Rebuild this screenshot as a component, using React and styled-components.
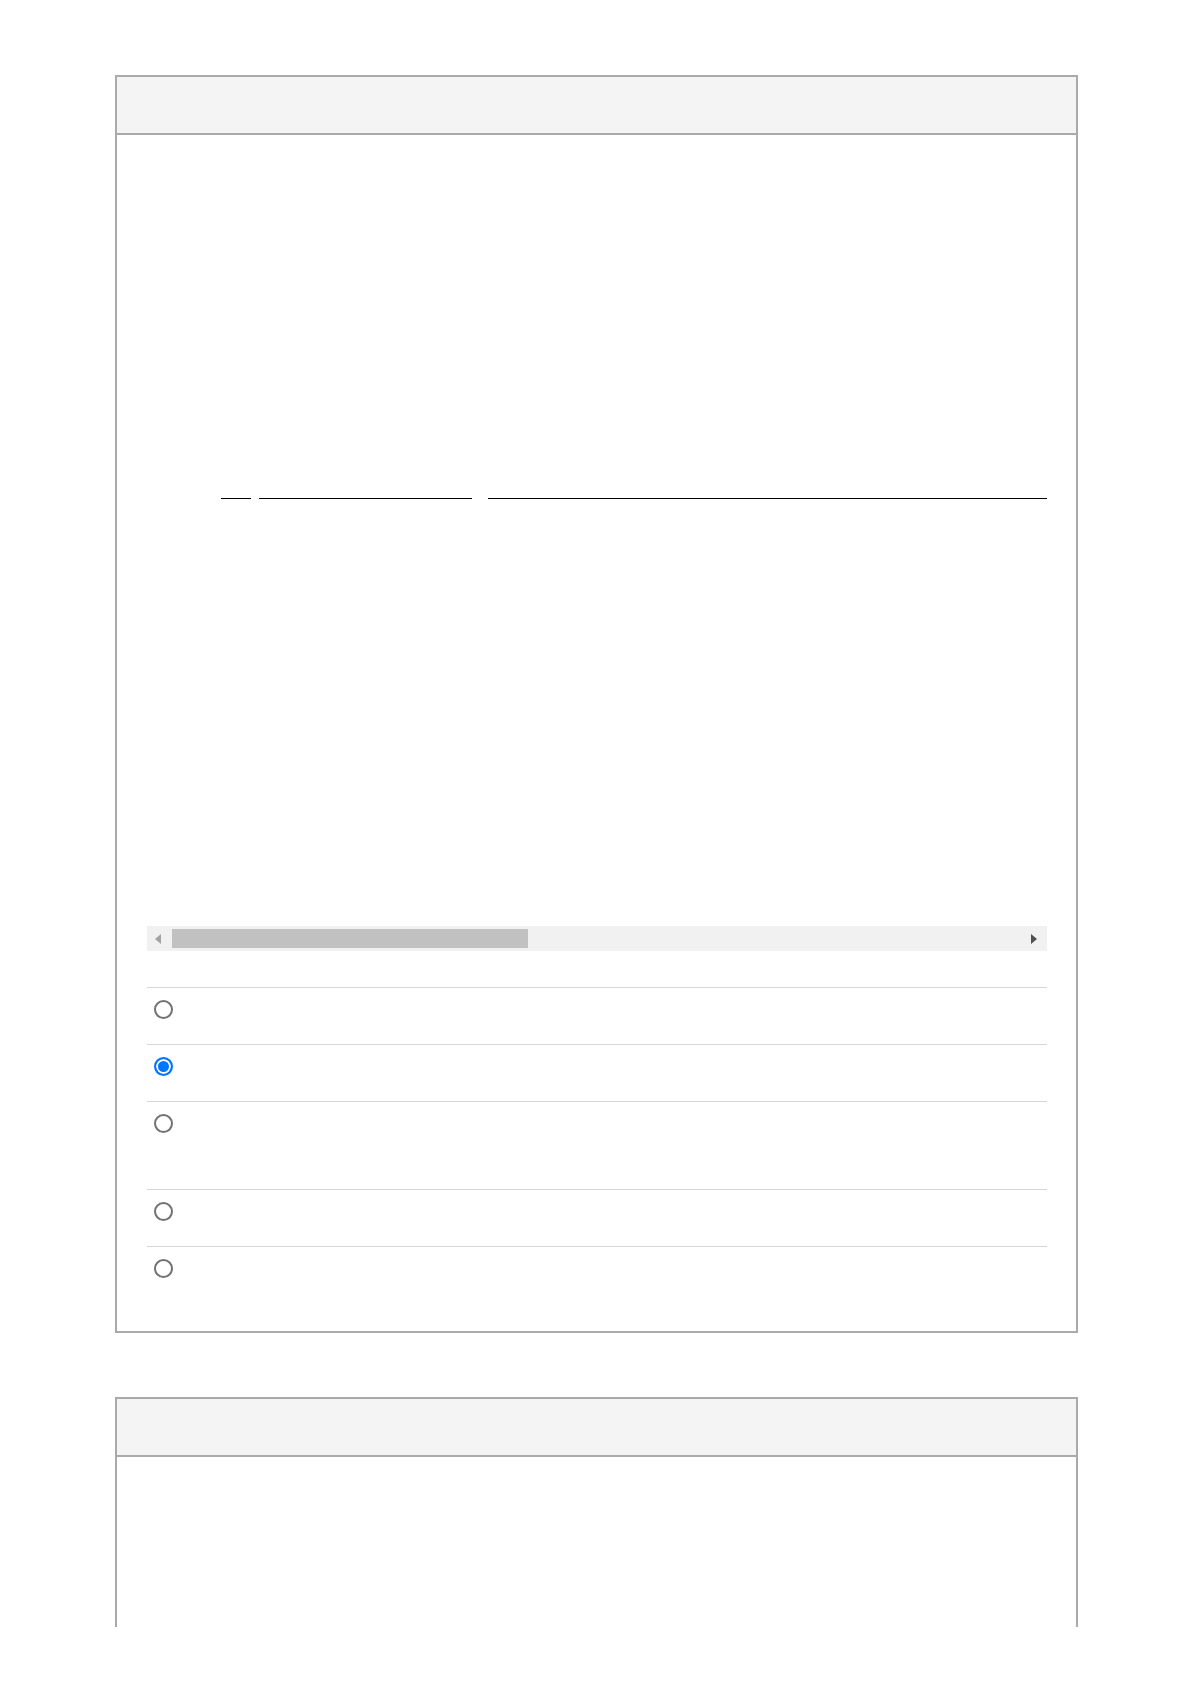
import React from 'react';
import styled, { createGlobalStyle } from 'styled-components';

const GlobalStyle = createGlobalStyle`
  html, body {
    margin: 0;
    padding: 0;
    background: #fff;
    font-family: "Liberation Sans", Arial, sans-serif;
    color: #222;
  }
`;

const Page = styled.div`
  height: 1627px;
  overflow: hidden;
  box-sizing: border-box;
  padding: 75px 0 0 115px;
`;

const Panel = styled.section`
  width: 963px;
  box-sizing: border-box;
  border: 2px solid #aaaaaa;
  background: #fff;
  margin-bottom: 64px;
  min-height: ${(p) => p.$minHeight || 'auto'};
`;

const PanelHeader = styled.header`
  height: 56px;
  background: #f4f4f4;
  border-bottom: 2px solid #aaaaaa;
`;

const PanelBody = styled.div`
  padding: 0 29px 28px 30px;
`;

// Underlined fields row
const FieldRow = styled.div`
  display: grid;
  grid-template-columns: 66px 30px 213px 1fr;
  column-gap: 8px;
  margin-top: 340px;
  & > div:nth-child(4) {
    margin-left: 8px;
  }
`;

const Field = styled.div`
  height: 23px;
  border-bottom: ${(p) => (p.$blank ? 'none' : '1px solid #000')};
`;

// Horizontal scrollbar
const ScrollTrack = styled.div`
  margin-top: 427px;
  height: 25px;
  background: #f1f1f1;
  display: flex;
  align-items: center;
  padding: 0 10px 0 8px;
`;

const Arrow = styled.span`
  width: 0;
  height: 0;
  border-top: 5px solid transparent;
  border-bottom: 5px solid transparent;
  ${(p) =>
    p.$dir === 'left'
      ? `border-right: 6px solid ${p.$color};`
      : `border-left: 6px solid ${p.$color};`}
`;

const Thumb = styled.div`
  width: 356px;
  height: 19px;
  margin-left: 11px;
  background: #c1c1c1;
`;

const Spacer = styled.div`
  flex: 1;
`;

// Option list
const OptionList = styled.ul`
  list-style: none;
  margin: 36px 0 0;
  padding: 0;
`;

const Option = styled.li`
  height: ${(p) => p.$h}px;
  box-sizing: border-box;
  border-top: 1px solid #d6d6d6;
  padding: 12px 0 0 7px;
`;

const Radio = styled.span`
  display: block;
  width: 19px;
  height: 19px;
  box-sizing: border-box;
  border-radius: 50%;
  border: 2px solid ${(p) => (p.$checked ? '#0075ff' : '#727272')};
  background: ${(p) => (p.$checked ? '#0075ff' : '#fff')};
  box-shadow: ${(p) => (p.$checked ? 'inset 0 0 0 2px #fff' : 'none')};
`;

const options = [
  { h: 57, checked: false },
  { h: 57, checked: true },
  { h: 88, checked: false },
  { h: 57, checked: false },
  { h: 57, checked: false },
];

const App = () => {
  return (
    <>
      <GlobalStyle />
      <Page>
        <Panel>
          <PanelHeader />
          <PanelBody>
            <FieldRow>
              <Field $blank />
              <Field />
              <Field />
              <Field />
            </FieldRow>
            <ScrollTrack>
              <Arrow $dir="left" $color="#a3a3a3" />
              <Thumb />
              <Spacer />
              <Arrow $dir="right" $color="#505050" />
            </ScrollTrack>
            <OptionList>
              {options.map((o, i) => (
                <Option key={i} $h={o.h}>
                  <Radio $checked={o.checked} />
                </Option>
              ))}
            </OptionList>
          </PanelBody>
        </Panel>
        <Panel $minHeight="600px">
          <PanelHeader />
        </Panel>
      </Page>
    </>
  );
};

export default App;
